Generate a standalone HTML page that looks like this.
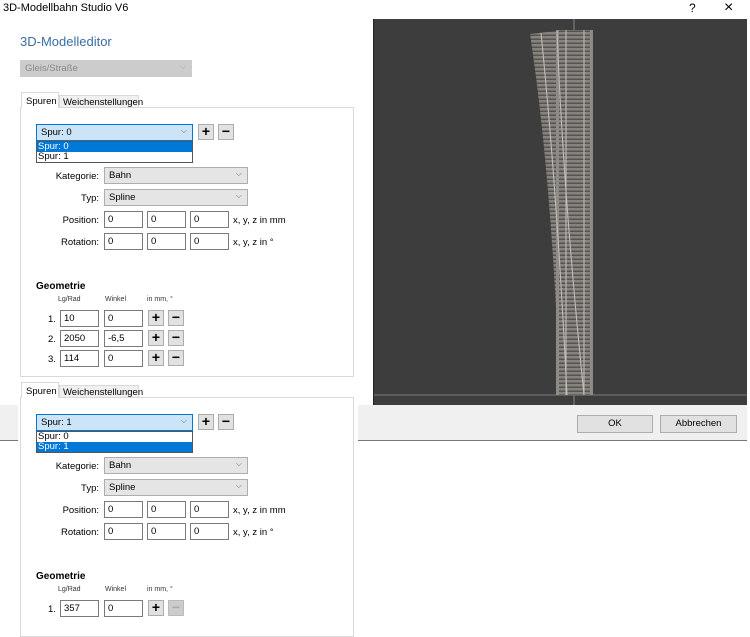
<!DOCTYPE html>
<html><head><meta charset="utf-8"><style>
*{margin:0;padding:0;box-sizing:border-box}
body{width:750px;height:631px;overflow:hidden;background:#fff;font-family:"Liberation Sans",sans-serif;font-size:9.5px;color:#000;position:relative}
.a{position:absolute}
.box{position:absolute;border:1px solid #7a7a7a;background:#fff;padding:2px 0 0 3px;font-size:9.5px}
.combo{position:absolute;background:#e5e5e5;border:1px solid #adadad;padding:2px 0 0 4px;font-size:9.5px}
.chev{position:absolute;right:5px;top:1px;color:#666;font-size:8px}
.btn{position:absolute;width:16px;height:16px;background:#e1e1e1;border:1px solid #adadad;text-align:center;font-weight:bold;font-size:14px;line-height:13px}
.lbl{position:absolute;text-align:right;font-size:9.5px}
.tab{position:absolute;font-size:9.5px}
.panel{position:absolute;border:1px solid #d9d9d9;background:#fff}
</style></head><body>
<div class="a" style="left:3px;top:2px;font-size:11px">3D-Modellbahn Studio V6</div>
<div class="a" style="left:689px;top:1px;font-size:12px">?</div>
<div class="a" style="left:724px;top:-1px;font-size:16px">×</div>
<div class="a" style="left:20px;top:34px;font-size:13px;color:#3b6ea5">3D-Modelleditor</div>
<div class="combo" style="left:20px;top:60px;width:172px;height:17px;background:#ccc;border-color:#ccc;color:#888">Gleis/Straße<span class="chev" style="color:#aaa">⌵</span></div>

<div class="a" style="left:0;top:405px;width:747px;height:36px;background:#f0f0f0;border-bottom:1px solid #777"></div>
<div class="a" style="left:577px;top:415px;width:76px;height:18px;background:#e1e1e1;border:1px solid #adadad;text-align:center;font-size:9.5px;line-height:16px">OK</div>
<div class="a" style="left:660px;top:415px;width:77px;height:18px;background:#e1e1e1;border:1px solid #adadad;text-align:center;font-size:9.5px;line-height:16px">Abbrechen</div>

<div class="a" style="left:373px;top:19px;width:374px;height:386px;background:#3d3d3d;border-left:1px solid #222"></div>
<svg class="a" style="left:0;top:0" width="750" height="631">
<defs>
<pattern id="sl" width="8" height="4" patternUnits="userSpaceOnUse"><rect width="8" height="4" fill="#86827d"/><rect y="2.5" width="8" height="1.5" fill="#57534f"/></pattern>
</defs>
<line x1="574" y1="19" x2="574" y2="30" stroke="#888" stroke-width="1"/>
<line x1="574" y1="395" x2="574" y2="405" stroke="#888" stroke-width="1"/>
<line x1="374" y1="395" x2="747" y2="395" stroke="#7a7a7a" stroke-width="1"/>
<path d="M530,34 L565,30 Q570,180 593,395 L560,395 Q552,180 530,34Z" fill="url(#sl)"/>
<rect x="556" y="30" width="37" height="365" fill="url(#sl)"/>
<rect x="556" y="30" width="3" height="365" fill="#8e8a85"/>
<rect x="590" y="30" width="3" height="365" fill="#8e8a85"/>
<line x1="566" y1="30" x2="566" y2="395" stroke="#bdbdbd" stroke-width="1.1"/>
<line x1="584" y1="30" x2="584" y2="395" stroke="#bdbdbd" stroke-width="1.1"/>
<path d="M541,33 Q557,190 567,395" fill="none" stroke="#bdbdbd" stroke-width="1.1"/>
<path d="M557,31 Q563,190 584,395" fill="none" stroke="#bdbdbd" stroke-width="1.1"/>
</svg>

<div class="panel" style="left:20px;top:107px;width:334px;height:270px"></div>
<div class="tab" style="left:21px;top:92px;width:38px;height:16px;background:#fff;border:1px solid #d9d9d9;border-bottom:none;padding:3px 0 0 4px">Spuren</div>
<div class="tab" style="left:59px;top:95px;width:80px;height:12px;background:#f0f0f0;border:1px solid #d9d9d9;border-bottom:none;padding:1px 0 0 3px">Weichenstellungen</div>
<div class="combo" style="left:36px;top:124px;width:157px;height:17px;background:#cce4f7;border-color:#0078d7">Spur: 0<span class="chev">⌵</span></div>
<div class="btn" style="left:198px;top:124px">+</div><div class="btn" style="left:218px;top:124px">−</div>
<div class="a" style="left:36px;top:141px;width:157px;height:22px;border:1px solid #555;background:#fff">
<div style="background:#0078d7;color:#fff;height:10px;padding-left:1px;line-height:10px">Spur: 0</div>
<div style="height:10px;padding-left:1px;line-height:10px">Spur: 1</div></div>
<div class="lbl" style="left:30px;top:171px;width:69px">Kategorie:</div>
<div class="combo" style="left:104px;top:167px;width:144px;height:17px">Bahn<span class="chev">⌵</span></div>
<div class="lbl" style="left:30px;top:193px;width:69px">Typ:</div>
<div class="combo" style="left:104px;top:189px;width:144px;height:17px">Spline<span class="chev">⌵</span></div>
<div class="lbl" style="left:30px;top:215px;width:69px">Position:</div>
<div class="box" style="left:104px;top:211px;width:39px;height:17px">0</div><div class="box" style="left:147px;top:211px;width:39px;height:17px">0</div><div class="box" style="left:190px;top:211px;width:39px;height:17px">0</div>
<div class="a" style="left:233px;top:215px">x, y, z in mm</div>
<div class="lbl" style="left:30px;top:237px;width:69px">Rotation:</div>
<div class="box" style="left:104px;top:233px;width:39px;height:17px">0</div><div class="box" style="left:147px;top:233px;width:39px;height:17px">0</div><div class="box" style="left:190px;top:233px;width:39px;height:17px">0</div>
<div class="a" style="left:233px;top:237px">x, y, z in °</div>
<div class="a" style="left:36px;top:281px;font-weight:bold;font-size:10px">Geometrie</div>
<div class="a" style="left:58px;top:296px;font-size:7px;color:#333">Lg/Rad</div>
<div class="a" style="left:105px;top:296px;font-size:7px;color:#333">Winkel</div>
<div class="a" style="left:147px;top:296px;font-size:7px;color:#333">in mm, °</div>
<div class="a" style="left:48px;top:314px">1.</div><div class="box" style="left:60px;top:310px;width:39px;height:17px">10</div><div class="box" style="left:104px;top:310px;width:39px;height:17px">0</div><div class="btn" style="left:148px;top:310px">+</div><div class="btn" style="left:168px;top:310px">−</div>
<div class="a" style="left:48px;top:334px">2.</div><div class="box" style="left:60px;top:330px;width:39px;height:17px">2050</div><div class="box" style="left:104px;top:330px;width:39px;height:17px">-6,5</div><div class="btn" style="left:148px;top:330px">+</div><div class="btn" style="left:168px;top:330px">−</div>
<div class="a" style="left:48px;top:354px">3.</div><div class="box" style="left:60px;top:350px;width:39px;height:17px">114</div><div class="box" style="left:104px;top:350px;width:39px;height:17px">0</div><div class="btn" style="left:148px;top:350px">+</div><div class="btn" style="left:168px;top:350px">−</div>

<div class="a" style="left:18px;top:378px;width:340px;height:253px;background:#fff"></div>
<div class="panel" style="left:20px;top:397px;width:334px;height:240px"></div>
<div class="tab" style="left:21px;top:382px;width:38px;height:16px;background:#fff;border:1px solid #d9d9d9;border-bottom:none;padding:3px 0 0 4px">Spuren</div>
<div class="tab" style="left:59px;top:385px;width:80px;height:12px;background:#f0f0f0;border:1px solid #d9d9d9;border-bottom:none;padding:1px 0 0 3px">Weichenstellungen</div>
<div class="combo" style="left:36px;top:414px;width:157px;height:17px;background:#cce4f7;border-color:#0078d7">Spur: 1<span class="chev">⌵</span></div>
<div class="btn" style="left:198px;top:414px">+</div><div class="btn" style="left:218px;top:414px">−</div>
<div class="a" style="left:36px;top:431px;width:157px;height:22px;border:1px solid #555;background:#fff">
<div style="height:10px;padding-left:1px;line-height:10px">Spur: 0</div>
<div style="background:#0078d7;color:#fff;height:10px;padding-left:1px;line-height:10px">Spur: 1</div></div>
<div class="lbl" style="left:30px;top:461px;width:69px">Kategorie:</div>
<div class="combo" style="left:104px;top:457px;width:144px;height:17px">Bahn<span class="chev">⌵</span></div>
<div class="lbl" style="left:30px;top:483px;width:69px">Typ:</div>
<div class="combo" style="left:104px;top:479px;width:144px;height:17px">Spline<span class="chev">⌵</span></div>
<div class="lbl" style="left:30px;top:505px;width:69px">Position:</div>
<div class="box" style="left:104px;top:501px;width:39px;height:17px">0</div><div class="box" style="left:147px;top:501px;width:39px;height:17px">0</div><div class="box" style="left:190px;top:501px;width:39px;height:17px">0</div>
<div class="a" style="left:233px;top:505px">x, y, z in mm</div>
<div class="lbl" style="left:30px;top:527px;width:69px">Rotation:</div>
<div class="box" style="left:104px;top:523px;width:39px;height:17px">0</div><div class="box" style="left:147px;top:523px;width:39px;height:17px">0</div><div class="box" style="left:190px;top:523px;width:39px;height:17px">0</div>
<div class="a" style="left:233px;top:527px">x, y, z in °</div>
<div class="a" style="left:36px;top:571px;font-weight:bold;font-size:10px">Geometrie</div>
<div class="a" style="left:58px;top:586px;font-size:7px;color:#333">Lg/Rad</div>
<div class="a" style="left:105px;top:586px;font-size:7px;color:#333">Winkel</div>
<div class="a" style="left:147px;top:586px;font-size:7px;color:#333">in mm, °</div>
<div class="a" style="left:48px;top:604px">1.</div><div class="box" style="left:60px;top:600px;width:39px;height:17px">357</div><div class="box" style="left:104px;top:600px;width:39px;height:17px">0</div><div class="btn" style="left:148px;top:600px">+</div><div class="btn" style="left:168px;top:600px;color:#aaa;background:#ccc;border-color:#bbb">−</div>
</body></html>
